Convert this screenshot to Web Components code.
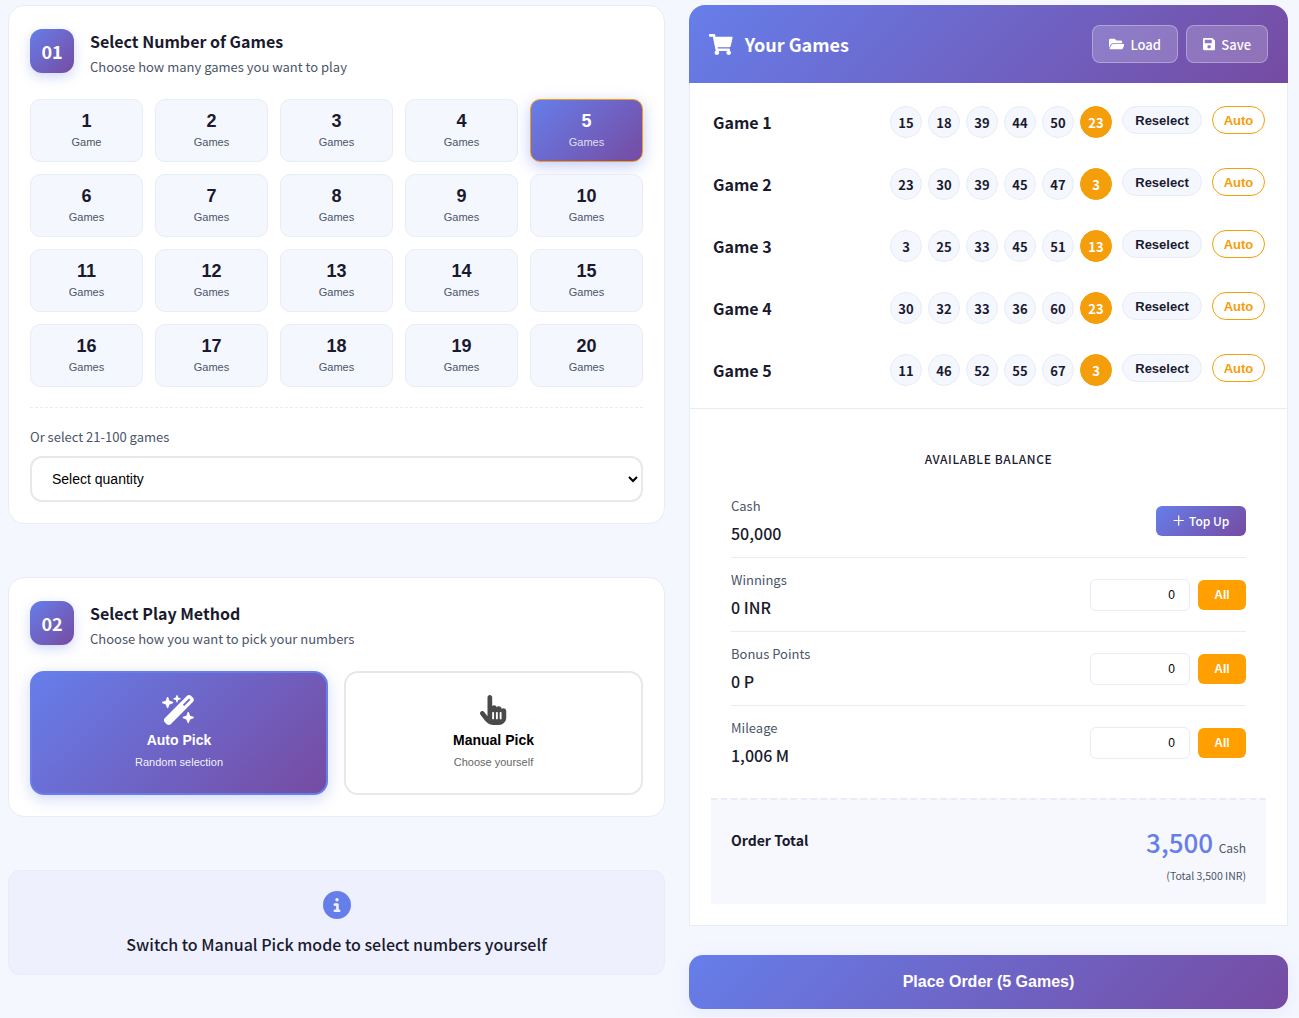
<!DOCTYPE html>
<html lang="en">
<head>
<meta charset="utf-8">
<title>Your Games</title>
<style>
  html, body { margin: 0; }
  body {
    background: #f5f7ff;
    color: #1a1a2e;
    font-family: "Noto Sans CJK KR", "Noto Sans", sans-serif;
    padding: 5px 11px 8px 8px;
  }
</style>
</head>
<body>
<lotto-page></lotto-page>
<script>
const GRAD = "linear-gradient(135deg, #667eea 0%, #764ba2 100%)";
const icons = {
  cart: ["0 0 576 512", "M528.12 301.319l47.273-208C578.806 78.301 567.391 64 551.99 64H159.208l-9.166-44.81C147.758 8.021 137.93 0 126.529 0H24C10.745 0 0 10.745 0 24v16c0 13.255 10.745 24 24 24h69.883l70.248 343.435C147.325 417.1 136 435.222 136 456c0 30.928 25.072 56 56 56s56-25.072 56-56c0-15.674-6.447-29.835-16.824-40h209.647C430.447 426.165 424 440.326 424 456c0 30.928 25.072 56 56 56s56-25.072 56-56c0-22.172-12.888-41.332-31.579-50.405l5.517-24.276c3.413-15.018-8.002-29.319-23.403-29.319H218.117l-6.545-32h293.145c11.206 0 20.92-7.754 23.403-18.681z"],
  folder: ["0 0 576 512", "M572.694 292.093L500.27 416.248A63.997 63.997 0 0 1 444.989 448H45.025c-18.523 0-30.064-20.093-20.731-36.093l72.424-124.155A64 64 0 0 1 152 256h399.964c18.523 0 30.064 20.093 20.73 36.093zM152 224h328v-48c0-26.51-21.49-48-48-48H272l-64-64H48C21.49 64 0 85.49 0 112v278.046l69.077-118.418C86.214 242.25 117.989 224 152 224z"],
  save: ["0 0 448 512", "M433.941 129.941l-83.882-83.882A48 48 0 0 0 316.118 32H48C21.49 32 0 53.49 0 80v352c0 26.51 21.49 48 48 48h352c26.51 0 48-21.49 48-48V163.882a48 48 0 0 0-14.059-33.941zM224 416c-35.346 0-64-28.654-64-64 0-35.346 28.654-64 64-64s64 28.654 64 64c0 35.346-28.654 64-64 64zm96-304.52V212c0 6.627-5.373 12-12 12H76c-6.627 0-12-5.373-12-12V108c0-6.627 5.373-12 12-12h228.52c3.183 0 6.235 1.264 8.485 3.515l3.48 3.48A11.996 11.996 0 0 1 320 111.48z"],
  wand: ["0 0 576 512", "M234.7 42.7L197 56.8c-3 1.1-5 4-5 7.2s2 6.1 5 7.2l37.7 14.1L248.8 123c1.1 3 4 5 7.2 5s6.1-2 7.2-5l14.1-37.7L315 71.2c3-1.1 5-4 5-7.2s-2-6.1-5-7.2L277.3 42.7 263.2 5c-1.1-3-4-5-7.2-5s-6.1 2-7.2 5L234.7 42.7zM46.1 395.4c-18.7 18.7-18.7 49.1 0 67.9l34.6 34.6c18.7 18.7 49.1 18.7 67.9 0L529.9 116.5c18.7-18.7 18.7-49.1 0-67.9L495.3 14.1c-18.7-18.7-49.1-18.7-67.9 0L46.1 395.4zM484.6 82.6l-105 105-23.3-23.3 105-105 23.3 23.3zM7.5 117.2C3 118.9 0 123.2 0 128s3 9.1 7.5 10.8L64 160l21.2 56.5c1.7 4.5 6 7.5 10.8 7.5s9.1-3 10.8-7.5L128 160l56.5-21.2c4.5-1.7 7.5-6 7.5-10.8s-3-9.1-7.5-10.8L128 96 106.8 39.5C105.1 35 100.8 32 96 32s-9.1 3-10.8 7.5L64 96 7.5 117.2zm352 256c-4.5 1.7-7.5 6-7.5 10.8s3 9.1 7.5 10.8L416 416l21.2 56.5c1.7 4.5 6 7.5 10.8 7.5s9.1-3 10.8-7.5L480 416l56.5-21.2c4.5-1.7 7.5-6 7.5-10.8s-3-9.1-7.5-10.8L480 352l-21.2-56.5c-1.7-4.5-6-7.5-10.8-7.5s-9.1 3-10.8 7.5L416 352l-56.5 21.2z"],
  hand: ["0 0 448 512", "M128 40c0-22.1 17.9-40 40-40s40 17.9 40 40V188.2c8.5-7.6 19.7-12.2 32-12.2c20.6 0 38.2 13 45 31.2c8.8-9.3 21.2-15.2 35-15.2c25.3 0 46 19.5 47.9 44.3c8.5-7.7 19.8-12.3 32.1-12.3c26.5 0 48 21.5 48 48v48 16 48c0 70.7-57.3 128-128 128l-16 0H240l-.1 0h-5.2c-5 0-9.9-.3-14.7-1c-55.3-5.6-106.2-34-140-79L8 336c-13.3-17.7-9.7-42.7 8-56s42.7-9.7 56 8l56 74.7V40zM240 304c0-8.8-7.2-16-16-16s-16 7.2-16 16v96c0 8.8 7.2 16 16 16s16-7.2 16-16V304zm48-16c-8.8 0-16 7.2-16 16v96c0 8.8 7.2 16 16 16s16-7.2 16-16V304c0-8.8-7.2-16-16-16zm80 16c0-8.8-7.2-16-16-16s-16 7.2-16 16v96c0 8.8 7.2 16 16 16s16-7.2 16-16V304z"],
  info: ["0 0 512 512", "M256 512A256 256 0 1 0 256 0a256 256 0 1 0 0 512zM216 336h24V272H216c-13.3 0-24-10.7-24-24s10.7-24 24-24h48c13.3 0 24 10.7 24 24v88h8c13.3 0 24 10.7 24 24s-10.7 24-24 24H216c-13.3 0-24-10.7-24-24s10.7-24 24-24zm40-208a32 32 0 1 1 0 64 32 32 0 1 1 0-64z"],
  plus: ["0 0 448 512", "M248 72c0-13.3-10.7-24-24-24s-24 10.7-24 24V232H40c-13.3 0-24 10.7-24 24s10.7 24 24 24H200V440c0 13.3 10.7 24 24 24s24-10.7 24-24V280H408c13.3 0 24-10.7 24-24s-10.7-24-24-24H248V72z"]
};

function icon(name, h, style = "") {
  const [box, d] = icons[name];
  const w = (box.split(" ")[2] / 512) * h;
  return `<svg viewBox="${box}" width="${w}" height="${h}" fill="currentColor" style="display:block;flex:none;${style}"><path d="${d}"/></svg>`;
}

// numbered section card on the left
const stepCardTemplate = document.createElement("template");
stepCardTemplate.innerHTML = `
  <style>
    :host {
      display: block;
      background: #fff;
      border: 1px solid #e8ecf4;
      border-radius: 16px;
      padding: 23px 21px 21px;
    }
    header { display: flex; gap: 16px; margin-bottom: 22px; }
    #num {
      width: 44px;
      height: 44px;
      border-radius: 12px;
      background: ${GRAD};
      box-shadow: 0 4px 12px rgba(102, 126, 234, .3);
      color: #fff;
      font-size: 18px;
      font-weight: 700;
      display: flex;
      align-items: center;
      justify-content: center;
      flex: none;
    }
    h2 { margin: 0; font-size: 16px; line-height: 24px; font-weight: 700; color: #1a1a2e; }
    p { margin: 4px 0 0; font-size: 13px; line-height: 20px; color: #4a5568; }
  </style>
  <header>
    <div id="num"></div>
    <div><h2></h2><p></p></div>
  </header>
  <slot></slot>
`;
class StepCard extends HTMLElement {
  constructor() {
    super();
    this.attachShadow({ mode: "open" }).appendChild(stepCardTemplate.content.cloneNode(true));
    this.shadowRoot.querySelector("#num").textContent = this.getAttribute("num");
    this.shadowRoot.querySelector("h2").textContent = this.getAttribute("heading");
    this.shadowRoot.querySelector("p").textContent = this.getAttribute("sub");
  }
}
customElements.define("step-card", StepCard);

const countTileTemplate = document.createElement("template");
countTileTemplate.innerHTML = `
  <style>
    :host {
      display: flex;
      flex-direction: column;
      align-items: center;
      height: 63px;
      box-sizing: border-box;
      padding-top: 10px;
      background: #f5f7ff;
      border: 1px solid #e8ecf4;
      border-radius: 10px;
      font-family: "Liberation Sans", Arial, sans-serif;
      color: #1a1a2e;
    }
    :host([selected]) {
      background: ${GRAD};
      border-color: #f59e0b;
      box-shadow: 0 4px 15px rgba(102, 126, 234, .4);
      color: #fff;
    }
    b { font-size: 18px; line-height: 22px; }
    span { font-size: 11px; line-height: 13px; margin-top: 4px; color: #4a5568; }
    :host([selected]) span { color: rgba(255, 255, 255, .8); }
  </style>
  <b></b><span></span>
`;
class CountTile extends HTMLElement {
  constructor() {
    super();
    this.attachShadow({ mode: "open" }).appendChild(countTileTemplate.content.cloneNode(true));
    const n = this.getAttribute("n");
    this.shadowRoot.querySelector("b").textContent = n;
    this.shadowRoot.querySelector("span").textContent = n === "1" ? "Game" : "Games";
  }
}
customElements.define("count-tile", CountTile);

const methodOptionTemplate = document.createElement("template");
methodOptionTemplate.innerHTML = `
  <style>
    :host {
      display: flex;
      flex-direction: column;
      align-items: center;
      height: 124px;
      box-sizing: border-box;
      padding-top: 22px;
      background: #fff;
      border: 2px solid #e8e8e8;
      border-radius: 14px;
      font-family: "Liberation Sans", Arial, sans-serif;
      color: #000;
    }
    :host([selected]) {
      background: ${GRAD};
      border-color: #667eea;
      box-shadow: 0 4px 15px rgba(102, 126, 234, .3);
      color: #fff;
    }
    #ico { color: #4a4a4a; height: 30px; }
    :host([selected]) #ico { color: #fff; }
    b { font-size: 14px; line-height: 18px; margin-top: 6px; }
    span { font-size: 11px; line-height: 14px; margin-top: 6px; color: #666; }
    :host([selected]) span { color: rgba(255, 255, 255, .95); }
  </style>
  <div id="ico"></div><b></b><span></span>
`;
class MethodOption extends HTMLElement {
  constructor() {
    super();
    this.attachShadow({ mode: "open" }).appendChild(methodOptionTemplate.content.cloneNode(true));
    this.shadowRoot.querySelector("#ico").innerHTML = icon(this.getAttribute("icon"), 30);
    this.shadowRoot.querySelector("b").textContent = this.getAttribute("label");
    this.shadowRoot.querySelector("span").textContent = this.getAttribute("sub");
  }
}
customElements.define("method-option", MethodOption);

// one line of the ticket: label, five balls, bonus ball, two pills
const gameRowTemplate = document.createElement("template");
gameRowTemplate.innerHTML = `
  <style>
    :host {
      display: flex;
      align-items: flex-start;
      justify-content: space-between;
      height: 62px;
      box-sizing: border-box;
      padding: 15px 22px 15px 23px;
    }
    #name { font-size: 16px; line-height: 32px; font-weight: 700; color: #1a1a2e; }
    #right { display: flex; align-items: flex-start; }
    #balls { display: flex; gap: 6px; margin-right: 10px; }
    .ball {
      width: 32px;
      height: 32px;
      box-sizing: border-box;
      border-radius: 50%;
      background: #f5f7ff;
      border: 1px solid #e8ecf4;
      display: flex;
      align-items: center;
      justify-content: center;
      font-size: 13px;
      font-weight: 700;
      color: #1a1a2e;
    }
    .ball.bonus { background: #f59e0b; border-color: #f59e0b; color: #fff; }
    .pill {
      height: 28px;
      box-sizing: border-box;
      border-radius: 14px;
      display: flex;
      align-items: center;
      justify-content: center;
      font-family: "Liberation Sans", Arial, sans-serif;
      font-size: 13px;
      font-weight: 700;
    }
    #re { width: 80px; background: #f5f7ff; border: 1px solid #e8ecf4; color: #1a1a2e; }
    #auto { width: 53px; margin-left: 10px; background: #fff; border: 1px solid #f59e0b; color: #f59e0b; }
  </style>
  <div id="name"></div>
  <div id="right">
    <div id="balls"></div>
    <div class="pill" id="re">Reselect</div>
    <div class="pill" id="auto">Auto</div>
  </div>
`;
class GameRow extends HTMLElement {
  constructor() {
    super();
    this.attachShadow({ mode: "open" }).appendChild(gameRowTemplate.content.cloneNode(true));
    this.shadowRoot.querySelector("#name").textContent = this.getAttribute("name");
    const nums = this.getAttribute("nums").split(" ");
    this.shadowRoot.querySelector("#balls").innerHTML = nums
      .map((n, i) => `<div class="ball${i === 5 ? " bonus" : ""}">${n}</div>`)
      .join("");
  }
}
customElements.define("game-row", GameRow);

const balanceRowTemplate = document.createElement("template");
balanceRowTemplate.innerHTML = `
  <style>
    :host {
      display: flex;
      align-items: center;
      justify-content: space-between;
      padding: 12px 0;
      border-bottom: 1px solid #e8ecf4;
    }
    :host(:last-of-type) { border-bottom: 0; }
    #label { font-size: 13px; line-height: 20px; color: #4a5568; }
    #value { font-size: 16px; line-height: 24px; margin-top: 5px; font-weight: 500; color: #1a1a2e; }
    #ctl { display: flex; align-items: center; gap: 8px; }
    input {
      width: 100px;
      height: 32px;
      box-sizing: border-box;
      padding: 0 14px;
      border: 1px solid #e8ecf4;
      border-radius: 6px;
      background: #fff;
      color: #000;
      text-align: right;
      font: 12px "Liberation Sans", Arial, sans-serif;
      outline: none;
    }
    #all {
      width: 48px;
      height: 30px;
      border-radius: 6px;
      background: #ffa000;
      color: #fff;
      display: flex;
      align-items: center;
      justify-content: center;
      font: 700 12px "Liberation Sans", Arial, sans-serif;
    }
  </style>
  <div><div id="label"></div><div id="value"></div></div>
  <div id="ctl"><slot><input value="0"><div id="all">All</div></slot></div>
`;
class BalanceRow extends HTMLElement {
  constructor() {
    super();
    this.attachShadow({ mode: "open" }).appendChild(balanceRowTemplate.content.cloneNode(true));
    this.shadowRoot.querySelector("#label").textContent = this.getAttribute("label");
    this.shadowRoot.querySelector("#value").textContent = this.getAttribute("value");
  }
}
customElements.define("balance-row", BalanceRow);

const pageTemplate = document.createElement("template");
pageTemplate.innerHTML = `
  <style>
    :host { display: grid; grid-template-columns: 657px 599px; gap: 24px; align-items: start; }
    #left { display: flex; flex-direction: column; gap: 53px; }
    #grid { display: grid; grid-template-columns: repeat(5, 1fr); gap: 12px; }
    #more { margin-top: 20px; padding-top: 19px; border-top: 1px dashed #e8ecf4; }
    #more label { display: block; font-size: 13px; line-height: 20px; color: #4a5568; margin-bottom: 9px; }
    select {
      display: block;
      width: 100%;
      height: 46px;
      box-sizing: border-box;
      padding: 0 16px;
      background: #fff;
      border: 2px solid #e8e8e8;
      border-radius: 12px;
      font: 14px "Liberation Sans", Arial, sans-serif;
      color: #000;
      outline: none;
    }
    #methods { display: grid; grid-template-columns: 298px 299px; gap: 16px; }
    #hint {
      height: 105px;
      box-sizing: border-box;
      padding-top: 20px;
      background: #eef1fd;
      border: 1px solid #e8ecf4;
      border-radius: 12px;
      display: flex;
      flex-direction: column;
      align-items: center;
      color: #667eea;
    }
    #hint strong { margin-top: 13px; font-size: 16px; line-height: 24px; font-weight: 500; color: #1a1a2e; }

    #bar {
      height: 78px;
      box-sizing: border-box;
      padding: 0 20px;
      background: ${GRAD};
      border-radius: 16px 16px 0 0;
      display: flex;
      align-items: center;
      justify-content: space-between;
      color: #fff;
    }
    #bar h2 { margin: 0; display: flex; align-items: center; gap: 12px; font-size: 18px; font-weight: 700; }
    #bar div { display: flex; gap: 8px; }
    #bar button {
      height: 38px;
      padding: 0 16px;
      display: flex;
      align-items: center;
      gap: 6px;
      background: rgba(255, 255, 255, .2);
      border: 1px solid rgba(255, 255, 255, .3);
      border-radius: 8px;
      color: #fff;
      font: 500 13px "Noto Sans CJK KR", "Noto Sans", sans-serif;
    }
    #sheet { background: #fff; border: 1px solid #e8ecf4; border-top: 0; }
    #games { padding: 8px 0 7px; border-bottom: 1px solid #e8ecf4; }
    #balance { padding: 40px 41px 0; }
    #balance h3 {
      margin: 0 0 15px;
      text-align: center;
      font-size: 12px;
      line-height: 20px;
      font-weight: 500;
      letter-spacing: .6px;
      color: #1a1a2e;
    }
    #topup {
      width: 90px;
      height: 30px;
      border-radius: 6px;
      background: ${GRAD};
      color: #fff;
      display: flex;
      align-items: center;
      justify-content: center;
      gap: 5px;
      font-size: 12px;
      font-weight: 500;
    }
    #total {
      margin: 19px 21px 21px;
      height: 106px;
      box-sizing: border-box;
      padding: 20px;
      background: #f7f8fd;
      border-top: 2px dashed #e8ecf4;
      display: flex;
      justify-content: space-between;
    }
    #total > b { font-size: 14px; line-height: 40px; font-weight: 700; color: #1a1a2e; }
    #sum { text-align: right; }
    #sum b { font-size: 26px; line-height: 44px; font-weight: 500; color: #667eea; }
    #sum span { font-size: 12px; margin-left: 2px; color: #4a5568; }
    #sum small { display: block; margin-top: 3px; font-size: 10.5px; line-height: 18px; color: #4a5568; }
    #order {
      margin-top: 29px;
      height: 54px;
      border-radius: 14px;
      background: ${GRAD};
      color: #fff;
      display: flex;
      align-items: center;
      justify-content: center;
      font: 700 16px "Liberation Sans", Arial, sans-serif;
      box-shadow: 0 4px 20px rgba(102, 126, 234, .1);
    }
  </style>
  <div id="left">
    <step-card num="01" heading="Select Number of Games" sub="Choose how many games you want to play">
      <div id="grid"></div>
      <div id="more">
        <label>Or select 21-100 games</label>
        <select><option>Select quantity</option></select>
      </div>
    </step-card>
    <step-card num="02" heading="Select Play Method" sub="Choose how you want to pick your numbers">
      <div id="methods">
        <method-option selected icon="wand" label="Auto Pick" sub="Random selection"></method-option>
        <method-option icon="hand" label="Manual Pick" sub="Choose yourself"></method-option>
      </div>
    </step-card>
    <div id="hint">
      ${icon("info", 28)}
      <strong>Switch to Manual Pick mode to select numbers yourself</strong>
    </div>
  </div>
  <div id="right">
    <div id="bar">
      <h2>${icon("cart", 21)}Your Games</h2>
      <div>
        <button>${icon("folder", 14)}Load</button>
        <button>${icon("save", 14)}Save</button>
      </div>
    </div>
    <div id="sheet">
      <div id="games">
        <game-row name="Game 1" nums="15 18 39 44 50 23"></game-row>
        <game-row name="Game 2" nums="23 30 39 45 47 3"></game-row>
        <game-row name="Game 3" nums="3 25 33 45 51 13"></game-row>
        <game-row name="Game 4" nums="30 32 33 36 60 23"></game-row>
        <game-row name="Game 5" nums="11 46 52 55 67 3"></game-row>
      </div>
      <div id="balance">
        <h3>AVAILABLE BALANCE</h3>
        <balance-row label="Cash" value="50,000"><div id="topup">${icon("plus", 13)}Top Up</div></balance-row>
        <balance-row label="Winnings" value="0 INR"></balance-row>
        <balance-row label="Bonus Points" value="0 P"></balance-row>
        <balance-row label="Mileage" value="1,006 M"></balance-row>
      </div>
      <div id="total">
        <b>Order Total</b>
        <div id="sum">
          <div><b>3,500</b> <span>Cash</span></div>
          <small>(Total 3,500 INR)</small>
        </div>
      </div>
    </div>
    <div id="order">Place Order (5 Games)</div>
  </div>
`;
const grid = pageTemplate.content.querySelector("#grid");
for (let i = 1; i <= 20; i++) {
  const tile = document.createElement("count-tile");
  tile.setAttribute("n", i);
  if (i === 5) tile.setAttribute("selected", "");
  grid.appendChild(tile);
}

class LottoPage extends HTMLElement {
  constructor() {
    super();
    this.attachShadow({ mode: "open" }).appendChild(pageTemplate.content.cloneNode(true));
  }
}
customElements.define("lotto-page", LottoPage);
</script>
</body>
</html>
